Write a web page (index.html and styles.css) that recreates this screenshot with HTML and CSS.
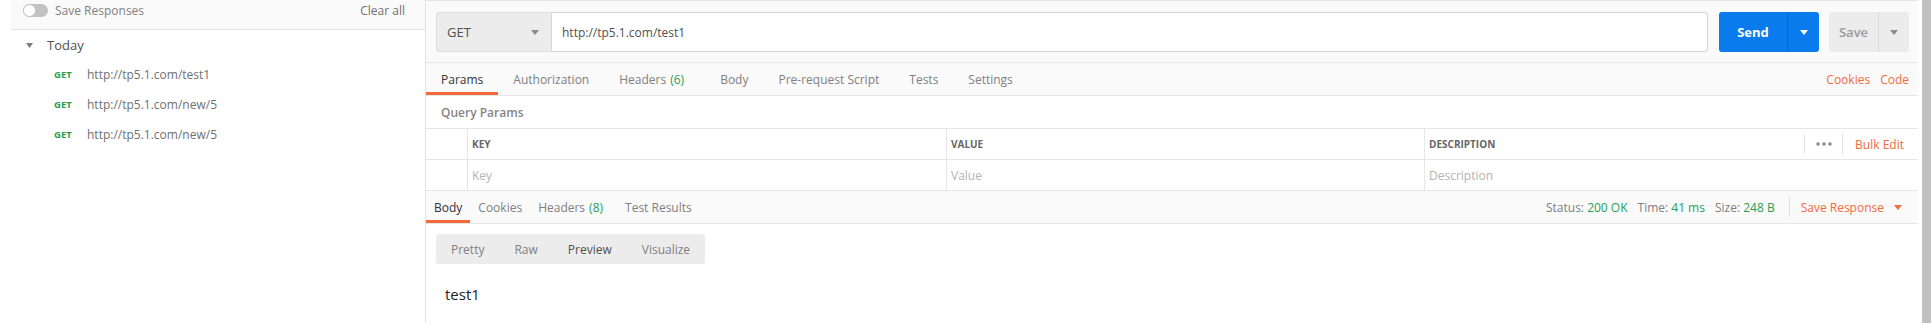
FILE: index.html
```html
<!DOCTYPE html>
<html>
<head>
<meta charset="utf-8">
<link rel="stylesheet" href="styles.css">
</head>
<body>
<div class="app">
  <aside class="sidebar">
    <div class="sb-top">
      <div class="sb-toggle-wrap">
        <span class="toggle"><span class="knob"></span></span>
        <span class="sb-label">Save Responses</span>
      </div>
      <span class="clear">Clear all</span>
    </div>
    <div class="group-head">
      <svg class="tri" width="7" height="5" viewBox="0 0 7 5"><polygon points="0,0 7,0 3.5,5" fill="#7a7a7a"/></svg>
      <span>Today</span>
    </div>
    <ul class="hist">
      <li><span class="get">GET</span><span class="url">http://tp5.1.com/test1</span></li>
      <li><span class="get">GET</span><span class="url">http://tp5.1.com/new/5</span></li>
      <li><span class="get">GET</span><span class="url">http://tp5.1.com/new/5</span></li>
    </ul>
  </aside>

  <main class="main">
    <div class="req-bar">
      <div class="method">
        <span>GET</span>
        <svg width="8" height="5" viewBox="0 0 8 5"><polygon points="0,0 8,0 4,5" fill="#8a8a8a"/></svg>
      </div>
      <div class="url-input">http://tp5.1.com/test1</div>
      <div class="send">
        <span class="send-main">Send</span>
        <span class="send-caret"><svg width="8" height="5" viewBox="0 0 8 5"><polygon points="0,0 8,0 4,5" fill="#ffffff"/></svg></span>
      </div>
      <div class="save">
        <span class="save-main">Save</span>
        <span class="save-caret"><svg width="8" height="5" viewBox="0 0 8 5"><polygon points="0,0 8,0 4,5" fill="#8a8a8a"/></svg></span>
      </div>
    </div>

    <div class="tabs">
      <div class="tab-list">
        <span class="tab active">Params</span>
        <span class="tab">Authorization</span>
        <span class="tab">Headers <span class="count">(6)</span></span>
        <span class="tab">Body</span>
        <span class="tab">Pre-request Script</span>
        <span class="tab">Tests</span>
        <span class="tab">Settings</span>
      </div>
      <div class="tab-links">
        <span>Cookies</span>
        <span>Code</span>
      </div>
    </div>

    <div class="qp-title">Query Params</div>

    <div class="ptable">
      <div class="cell first"></div>
      <div class="cell th">KEY</div>
      <div class="cell th">VALUE</div>
      <div class="cell th desc">
        <span>DESCRIPTION</span>
        <div class="th-actions">
          <span class="vsep"></span>
          <svg class="dots" width="16" height="4" viewBox="0 0 16 4"><circle cx="2" cy="2" r="1.8" fill="#8a8a8a"/><circle cx="8" cy="2" r="1.8" fill="#8a8a8a"/><circle cx="14" cy="2" r="1.8" fill="#8a8a8a"/></svg>
          <span class="vsep"></span>
          <span class="bulk">Bulk Edit</span>
        </div>
      </div>
      <div class="cell first"></div>
      <div class="cell ph">Key</div>
      <div class="cell ph">Value</div>
      <div class="cell ph">Description</div>
    </div>

    <div class="resp-bar">
      <div class="rtabs">
        <span class="rtab active">Body</span>
        <span class="rtab">Cookies</span>
        <span class="rtab">Headers <span class="count">(8)</span></span>
        <span class="rtab">Test Results</span>
      </div>
      <div class="meta">
        <span class="m">Status: <span class="val">200 OK</span></span>
        <span class="m">Time: <span class="val">41 ms</span></span>
        <span class="m">Size: <span class="val">248 B</span></span>
        <span class="vsep2"></span>
        <span class="save-resp">Save Response
          <svg width="8" height="5" viewBox="0 0 8 5"><polygon points="0,0 8,0 4,5" fill="#f26b3a"/></svg>
        </span>
      </div>
    </div>

    <div class="resp-body">
      <div class="seg">
        <span>Pretty</span>
        <span>Raw</span>
        <span class="on">Preview</span>
        <span>Visualize</span>
      </div>
      <div class="preview">test1</div>
    </div>
  </main>

  <div class="scrollbar"></div>
</div>
</body>
</html>
```

FILE: styles.css
```css
* { box-sizing: border-box; }
html, body { margin: 0; padding: 0; height: 100%; background: #fff; }
body {
  font-family: "Open Sans", "Liberation Sans", sans-serif;
  font-size: 12px;
  color: #505050;
}
.app { display: flex; height: 323px; overflow: hidden; }

/* Sidebar */
.sidebar {
  width: 426px;
  flex: none;
  border-right: 1px solid #e2e2e2;
  background: #fff;
}
.sb-top {
  margin-left: 11px;
  height: 30px;
  background: #fafafa;
  border-bottom: 1px solid #e6e6e6;
  display: flex;
  align-items: flex-start;
  justify-content: space-between;
  padding: 2px 20px 0 12px;
}
.sb-toggle-wrap { display: flex; align-items: center; }
.toggle {
  width: 25px; height: 13px;
  border-radius: 7px;
  background: #c2c2c2;
  display: inline-block;
  position: relative;
  margin-right: 7px;
}
.knob {
  position: absolute; left: 0; top: 0;
  width: 13px; height: 13px; border-radius: 50%;
  background: #fff;
  border: 1px solid #c2c2c2;
}
.sb-label { color: #808080; font-size: 12px; }
.clear { color: #707070; font-size: 12px; }

.group-head {
  height: 30px;
  display: flex; align-items: center;
  padding-left: 26px;
  font-size: 13px;
  color: #505050;
}
.group-head .tri { margin-right: 14px; }
.hist { list-style: none; margin: 0; padding: 0; }
.hist li {
  height: 30px;
  display: flex; align-items: center;
  padding-left: 54px;
}
.hist li:first-child { margin-top: -1px; }
.get {
  width: 33px;
  color: #26a154;
  font-weight: 700;
  font-size: 9.5px;
}
.url { color: #707070; font-size: 12px; }

/* Main */
.main {
  width: 1492px;
  flex: none;
  display: flex;
  flex-direction: column;
  background: #fff;
}
.req-bar {
  height: 62px;
  background: #fafafa;
  border-top: 1px solid #e6e6e6;
  display: flex;
  align-items: flex-start;
  padding: 11px 9px 0 10px;
}
.method {
  width: 115px;
  height: 40px;
  background: #ececec;
  border: 1px solid #dcdcdc;
  border-right: none;
  border-radius: 3px 0 0 3px;
  display: flex; align-items: center; justify-content: space-between;
  padding: 0 12px 0 10px;
  font-size: 13px;
  color: #505050;
}
.url-input {
  flex: 1;
  height: 40px;
  background: #fff;
  border: 1px solid #d4d4d4;
  border-radius: 0 3px 3px 0;
  display: flex; align-items: center;
  padding-left: 10px;
  font-size: 12px;
  color: #505050;
}
.send {
  margin-left: 11px;
  width: 100px; height: 40px;
  background: #097bed;
  border-radius: 3px;
  display: flex;
  color: #fff;
}
.send-main {
  width: 69px;
  display: flex; align-items: center; justify-content: center;
  font-weight: 700; font-size: 13px;
  border-right: 1px solid #0665c8;
}
.send-caret { flex: 1; display: flex; align-items: center; justify-content: center; }
.save {
  margin-left: 10px;
  width: 80px; height: 40px;
  background: #ececec;
  border-radius: 3px;
  display: flex;
  color: #9a9a9a;
}
.save-main {
  width: 50px;
  display: flex; align-items: center; justify-content: center;
  font-weight: 600; font-size: 13px;
  border-right: 1px solid #dadada;
}
.save-caret { flex: 1; display: flex; align-items: center; justify-content: center; }

.tabs {
  height: 34px;
  background: #fafafa;
  border-top: 1px solid #e6e6e6;
  border-bottom: 1px solid #e6e6e6;
  display: flex;
  justify-content: space-between;
  align-items: stretch;
}
.tab-list { display: flex; }
.tab {
  padding: 3px 15px 0;
  display: flex; align-items: center;
  color: #808080;
  border-bottom: 3px solid transparent;
}
.tab.active { color: #333; border-bottom-color: #f26b3a; }
.count { color: #26a154; margin-left: 4px; margin-right: 6px; }
.val { color: #26a154; }
.tab-links { display: flex; align-items: center; padding-right: 9px; color: #f26b3a; }
.tab-links span + span { margin-left: 10px; }

.qp-title {
  height: 32px;
  display: flex; align-items: center;
  padding-left: 15px;
  color: #858585;
  font-weight: 600;
  font-size: 12px;
}

.ptable {
  display: grid;
  grid-template-columns: 41px 479px 478px 1fr;
  grid-auto-rows: 31px;
  border-top: 1px solid #e6e6e6;
}
.cell {
  border-bottom: 1px solid #e6e6e6;
  border-left: 1px solid #e6e6e6;
  display: flex; align-items: center;
  padding-left: 4px;
}
.cell.first { border-left: none; }
.th { font-size: 10px; font-weight: 700; color: #666; }
.ph { color: #b3b3b3; font-size: 12px; }
.desc { justify-content: space-between; padding-right: 14px; }
.th-actions { display: flex; align-items: center; height: 100%; }
.vsep { width: 1px; height: 20px; background: #e2e2e2; }
.dots { margin: 0 10px 0 11px; }
.bulk { color: #f26b3a; font-size: 12px; font-weight: 400; margin-left: 12px; }

.resp-bar {
  height: 33px;
  background: #fafafa;
  border-bottom: 1px solid #e6e6e6;
  display: flex;
  justify-content: space-between;
}
.rtabs { display: flex; }
.rtab {
  padding: 3px 8px 0;
  display: flex; align-items: center;
  color: #808080;
  border-bottom: 3px solid transparent;
}
.rtab.active { color: #333; border-bottom-color: #f26b3a; }
.meta { display: flex; align-items: center; padding-right: 16px; color: #808080; }
.m { margin-right: 10px; }
.vsep2 { width: 1px; height: 20px; background: #e2e2e2; margin: 0 11px 0 4px; }
.save-resp { color: #f26b3a; font-weight: 400; display: flex; align-items: center; }
.save-resp svg { margin-left: 10px; }

.resp-body { padding: 10px 10px; }
.seg {
  display: inline-flex;
  height: 30px;
  background: #ececec;
  border-radius: 3px;
  align-items: center;
}
.seg span { padding: 0 15px; color: #808080; }
.seg span.on { color: #505050; }
.preview {
  margin: 20px 0 0 9px;
  font-size: 15px;
  color: #222;
}

.scrollbar {
  margin-left: 4px;
  width: 9px;
  flex: none;
  background: #c1c1c1;
}
```
